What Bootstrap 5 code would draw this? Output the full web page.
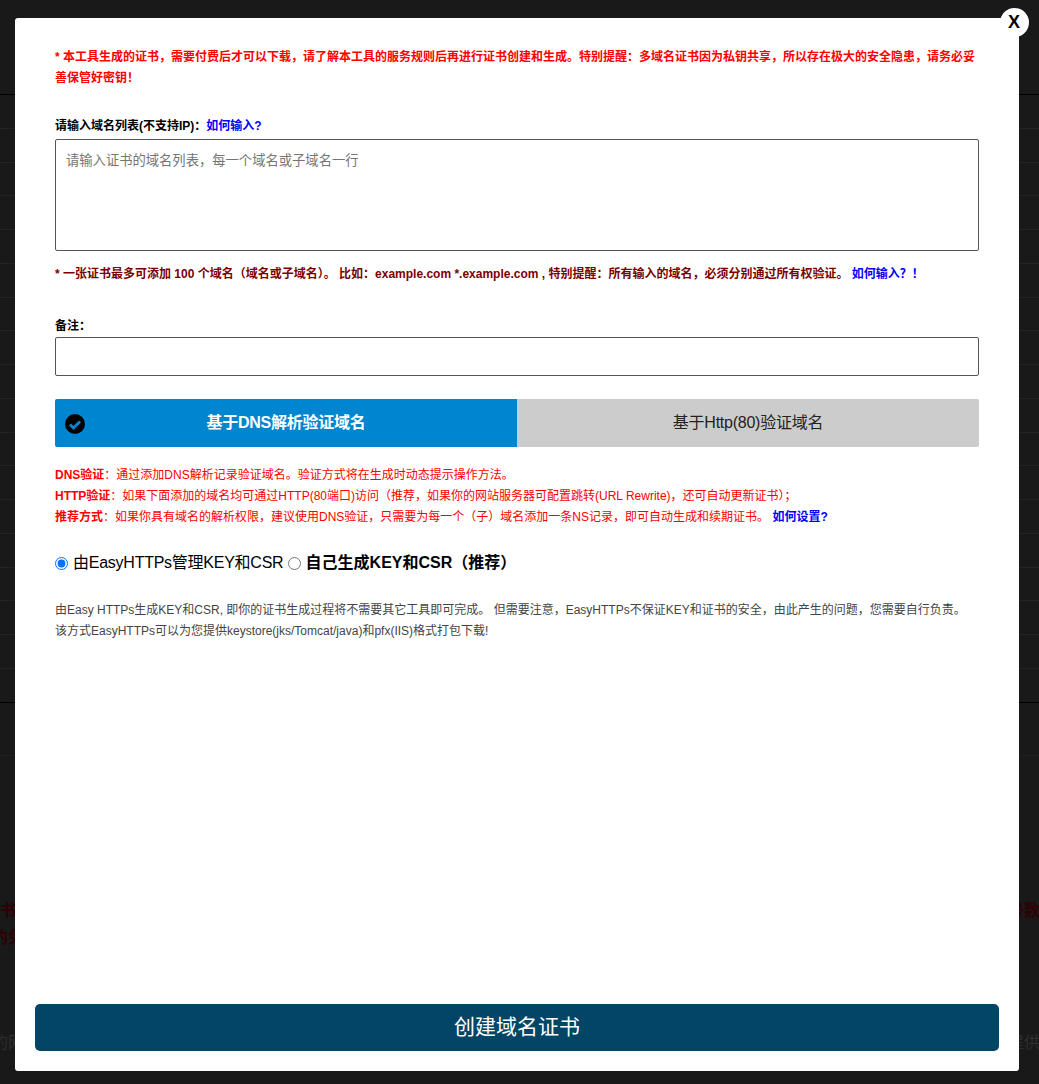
<!DOCTYPE html>
<html lang="zh">
<head>
<meta charset="utf-8">
<title>创建域名证书</title>
<link href="https://cdn.jsdelivr.net/npm/bootstrap@5.3.0/dist/css/bootstrap.min.css" rel="stylesheet">
<style>
html,body{height:1084px;overflow:hidden}
body{background:#191919;font-family:"Liberation Sans","Noto Sans CJK SC",sans-serif;font-size:12px;color:#333}
.backdrop-page{height:1084px;width:1039px;overflow:hidden}
.bg-rows{padding-top:94px}
.bg-rows div{height:33.78px;border-top:1px solid #242424}
.bg-rows div:first-child,.bg-rows div:last-child{border-top-color:#000}
.bg-rows div:last-child{height:53px;border-top-width:1px}
.bg-foot{height:1px;background:#1f1f1f}
.bg-red{color:#300005;font-size:16px;font-weight:700;line-height:27px;white-space:nowrap}
.bg-first{margin-top:141px}
.bg-gray{color:#2f2f2f;font-size:16px;line-height:27px;white-space:nowrap;margin-top:78px}
.bg-right{margin-right:-1px}
.bg-left{margin-left:-8px}
.sheet{position:absolute;left:15px;top:18px;width:1004px;height:1053px;background:#fff;border-radius:3px;padding:0 40px;color:#333}
.close-x{position:absolute;right:-10px;top:-10px;width:29px;height:29px;border-radius:50%;background:#fff;color:#000;font-size:18px;font-weight:700;line-height:29px;text-align:center;text-decoration:none;padding-right:1px}
.warn{color:#f00;font-weight:700;line-height:21px;padding-top:29px;margin:0;height:71px}
.lbl{color:#000;font-weight:700;line-height:21px;margin:0}
.lbl-domain{margin-top:27px}
.lbl-memo{margin-top:31px}
.lbl a,.note a,.tips a{color:#00f;text-decoration:none;font-weight:700}
.domain-area{display:block;width:100%;height:112px;border:1px solid #555;border-radius:2px;padding:10px;font-size:13.3px;line-height:21px;outline:0;resize:none;color:#333;margin-top:2px}
.domain-area::placeholder{color:#757575}
.memo{display:block;width:100%;height:39px;border:1px solid #555;border-radius:2px;outline:0}
.note{color:#7a0000;font-weight:700;line-height:21px;margin:13px 0 0}
.tabs-row{height:48px;margin-top:23px}
.tab-on{background:#0085d0;color:#fff;font-size:16px;font-weight:700;border-radius:2px 0 0 2px;letter-spacing:-.25px}
.tab-off{background:#ccc;color:#222;font-size:16px;border-radius:0 2px 2px 0;letter-spacing:-.25px}
.tab-on,.tab-off{flex:1 1 50%;position:relative}
.tick{position:absolute;left:10px;top:15px;width:20px;height:20px}
.tips{color:#f00;line-height:21px;margin:18px 0 0}
.tips b{font-weight:700}
.choice{font-size:16px;color:#000;margin-top:23px;height:24px;letter-spacing:-.25px}
.choice input{margin:0 5px 0 0;width:13px;height:13px;accent-color:#0075ff}
.choice b{font-weight:700;letter-spacing:0}
.desc{line-height:21px;margin:25px 0 0;color:#444}
.submit-bar{position:absolute;left:20px;right:20px;bottom:20px;height:47px;background:#034566;color:#fff;font-size:21px;border-radius:5px;border:0;padding:0 0 2px}
</style>
</head>
<body>
<div class="backdrop-page">
<div class="bg-rows"><div></div><div></div><div></div><div></div><div></div><div></div><div></div><div></div><div></div><div></div><div></div><div></div><div></div><div></div><div></div><div></div><div></div><div></div><div></div></div>
<div class="bg-foot"></div>
<div class="bg-red bg-first d-flex justify-content-between"><span>书籍</span><span class="bg-right">号数</span></div>
<div class="bg-red d-flex"><span class="bg-left">的免</span></div>
<div class="bg-gray d-flex justify-content-between"><span class="bg-left">的网</span><span class="bg-right">提供</span></div>
</div>
<div class="sheet">
<a class="close-x" href="#">X</a>
<p class="warn">* 本工具生成的证书，需要付费后才可以下载，请了解本工具的服务规则后再进行证书创建和生成。特别提醒：多域名证书因为私钥共享，所以存在极大的安全隐患，请务必妥善保管好密钥！</p>
<p class="lbl lbl-domain">请输入域名列表(不支持IP)：<a href="#">如何输入?</a></p>
<textarea class="domain-area" placeholder="请输入证书的域名列表，每一个域名或子域名一行"></textarea>
<p class="note">* 一张证书最多可添加 100 个域名（域名或子域名）。 比如：example.com *.example.com , 特别提醒：所有输入的域名，必须分别通过所有权验证。 <a href="#">如何输入？！</a></p>
<p class="lbl lbl-memo">备注：</p>
<input class="memo" type="text">
<div class="tabs-row d-flex">
<div class="tab-on d-flex align-items-center justify-content-center">
<svg class="tick" viewBox="0 0 20 20"><circle cx="10" cy="10" r="10" fill="#000"/><path d="M5 10.5l3.5 3.5L15 7.5" fill="none" stroke="#0085d0" stroke-width="3"/></svg>
基于DNS解析验证域名</div>
<div class="tab-off d-flex align-items-center justify-content-center">基于Http(80)验证域名</div>
</div>
<p class="tips"><b>DNS验证</b>：通过添加DNS解析记录验证域名。验证方式将在生成时动态提示操作方法。<br>
<b>HTTP验证</b>：如果下面添加的域名均可通过HTTP(80端口)访问（推荐，如果你的网站服务器可配置跳转(URL Rewrite)，还可自动更新证书）；<br>
<b>推荐方式</b>：如果你具有域名的解析权限，建议使用DNS验证，只需要为每一个（子）域名添加一条NS记录，即可自动生成和续期证书。 <a href="#">如何设置?</a></p>
<div class="choice d-flex align-items-center"><input type="radio" name="k" checked>由EasyHTTPs管理KEY和CSR&nbsp;<input type="radio" name="k"><b>自己生成KEY和CSR（推荐）</b></div>
<p class="desc">由Easy HTTPs生成KEY和CSR, 即你的证书生成过程将不需要其它工具即可完成。 但需要注意，EasyHTTPs不保证KEY和证书的安全，由此产生的问题，您需要自行负责。<br>该方式EasyHTTPs可以为您提供keystore(jks/Tomcat/java)和pfx(IIS)格式打包下载!</p>
<button class="submit-bar" type="button">创建域名证书</button>
</div>
<script src="https://cdn.jsdelivr.net/npm/bootstrap@5.3.0/dist/js/bootstrap.bundle.min.js"></script>
</body>
</html>
